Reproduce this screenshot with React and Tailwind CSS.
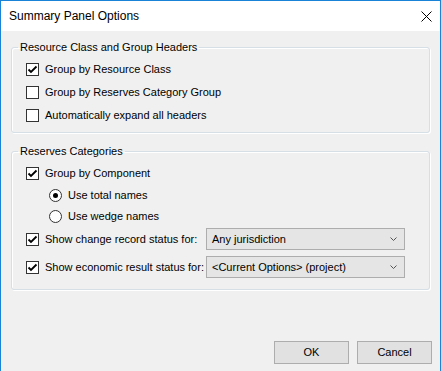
import React from "react";

const font = { fontFamily: '"Liberation Sans", Arial, sans-serif' };

const Check = ({ checked }) => (
    <span className="w-[13px] h-[13px] border border-[#333333] bg-white flex items-center justify-center shrink-0">
        {checked && (
            <svg width="11" height="11" viewBox="0 0 11 11">
                <path d="M1.5 5.5 L4 8 L9.5 2.5" fill="none" stroke="#000" strokeWidth="1.8" />
            </svg>
        )}
    </span>
);

const Radio = ({ checked }) => (
    <span className="w-[13px] h-[13px] rounded-full border border-[#333333] bg-white flex items-center justify-center shrink-0">
        {checked && <span className="w-[5px] h-[5px] rounded-full bg-black" />}
    </span>
);

const Combo = ({ value }) => (
    <div className="w-[199px] h-[22px] border border-[#adadad] bg-[#e5e5e5] flex items-center justify-between pl-[5px] pr-[7px]">
        <span>{value}</span>
        <svg width="7" height="4" viewBox="0 0 7 4">
            <path d="M0.5 0.5 L3.5 3.5 L6.5 0.5" fill="none" stroke="#555" strokeWidth="1" />
        </svg>
    </div>
);

const Group = ({ title, className, children }) => (
    <fieldset className={`mx-[10px] border border-[#d5dfe5] rounded-[3px] shadow-[inset_1px_1px_0_#ffffff,1px_1px_0_#ffffff] ${className}`}>
        <legend className="ml-[6px] px-[2px] leading-[13px]">{title}</legend>
        {children}
    </fieldset>
);

export default function App() {
    return (
        <div className="w-[441px] h-[371px] bg-[#f0f0f0] border-x border-t border-[#1883d7] flex flex-col text-[11px] text-black" style={font}>
            {/* Title bar */}
            <div className="h-[30px] bg-white flex items-center justify-between pl-[8px] pr-[8px] shrink-0">
                <span className="text-[12px] text-[#000]">Summary Panel Options</span>
                <svg width="11" height="11" viewBox="0 0 11 11">
                    <path d="M0.5 0.5 L10.5 10.5 M10.5 0.5 L0.5 10.5" stroke="#000" strokeWidth="1" />
                </svg>
            </div>

            <div className="pt-[10px] flex flex-col flex-1">
                <Group title="Resource Class and Group Headers" className="pt-[4px] pb-[6px]">
                    <label className="h-[23px] flex items-center gap-[6px] pl-[14px]">
                        <Check checked />
                        Group by Resource Class
                    </label>
                    <label className="h-[23px] flex items-center gap-[6px] pl-[14px]">
                        <Check />
                        Group by Reserves Category Group
                    </label>
                    <label className="h-[22px] flex items-center gap-[6px] pl-[14px]">
                        <Check />
                        Automatically expand all headers
                    </label>
                </Group>

                <Group title="Reserves Categories" className="mt-[12px] pt-[4px] pb-[11px]">
                    <label className="h-[23px] flex items-center gap-[6px] pl-[14px]">
                        <Check checked />
                        Group by Component
                    </label>
                    <label className="h-[21px] flex items-center gap-[6px] pl-[37px]">
                        <Radio checked />
                        Use total names
                    </label>
                    <label className="h-[21px] flex items-center gap-[6px] pl-[37px]">
                        <Radio />
                        Use wedge names
                    </label>
                    <div className="mt-[1px] h-[22px] flex items-center pl-[14px]">
                        <label className="flex items-center gap-[6px] w-[180px]">
                            <Check checked />
                            Show change record status for:
                        </label>
                        <Combo value="Any jurisdiction" />
                    </div>
                    <div className="mt-[6px] h-[22px] flex items-center pl-[14px]">
                        <label className="flex items-center gap-[6px] w-[180px]">
                            <Check checked />
                            Show economic result status for:
                        </label>
                        <Combo value="<Current Options> (project)" />
                    </div>
                </Group>

                <div className="mt-auto mb-[7px] flex justify-end gap-[8px] pr-[8px]">
                    <button className="w-[75px] h-[23px] bg-[#e1e1e1] border border-[#adadad]">OK</button>
                    <button className="w-[75px] h-[23px] bg-[#e1e1e1] border border-[#adadad]">Cancel</button>
                </div>
            </div>
        </div>
    );
}
